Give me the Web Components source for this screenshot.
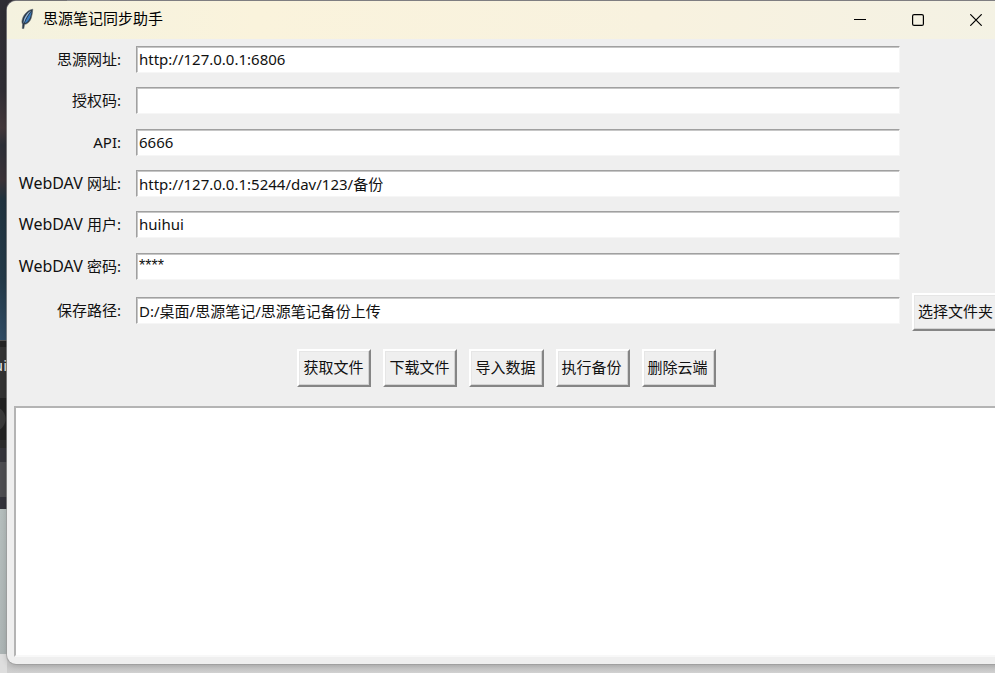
<!DOCTYPE html>
<html lang="zh-CN">
<head>
<meta charset="utf-8">
<title>思源笔记同步助手</title>
<style>
html,body{height:100%;margin:0;overflow:hidden}
body{font-family:"Noto Sans","Noto Sans CJK SC",sans-serif;font-size:15px;line-height:21px;color:#111}
</style>
</head>
<body>
<desk-top>
  <desk-strip slot="strip">ui</desk-strip>
  <app-window>
    <title-bar slot="bar">思源笔记同步助手</title-bar>
    <field-group>
      <field-row label="思源网址:" value="http://127.0.0.1:6806"></field-row>
      <field-row label="授权码:" value=""></field-row>
      <field-row label="API:" value="6666"></field-row>
      <field-row prefix="WebDAV" label="网址:" value="http://127.0.0.1:5244/dav/123/备份"></field-row>
      <field-row prefix="WebDAV" label="用户:" value="huihui"></field-row>
      <field-row class="secret" prefix="WebDAV" label="密码:" value="****"></field-row>
    </field-group>
    <field-row class="path" label="保存路径:" value="D:/桌面/思源笔记/思源笔记备份上传"><tk-button>选择文件夹</tk-button></field-row>
    <button-bar>
      <tk-button>获取文件</tk-button>
      <tk-button>下载文件</tk-button>
      <tk-button>导入数据</tk-button>
      <tk-button>执行备份</tk-button>
      <tk-button>删除云端</tk-button>
    </button-bar>
    <log-box></log-box>
  </app-window>
</desk-top>
<script>
const define = (name, html, setup) => {
  const t = document.createElement('template');
  t.innerHTML = html;
  customElements.define(name, class extends HTMLElement {
    constructor() {
      super();
      this.attachShadow({mode: 'open'}).append(t.content.cloneNode(true));
    }
    connectedCallback() { if (setup) setup(this, this.shadowRoot); }
  });
};

define('desk-top', `<style>
:host{display:grid;grid-template-columns:7px minmax(0,1fr);height:100vh;box-sizing:border-box;overflow:hidden;
  background:linear-gradient(90deg,#302e35 0 67px,#77757b 67px 110px,#514c55 110px) top/100% 12px no-repeat,
  linear-gradient(#d8d8d8,#c9c9c9 12px,#d0d0d0) bottom/100% 19px no-repeat,#302e35}
.main{display:flex;flex-direction:column;padding:1px 0 9px;margin-right:-11px;min-width:0}
::slotted(app-window){flex:1}
</style><slot name="strip"></slot><div class="main"><slot></slot></div>`);

define('desk-strip', `<style>
:host{display:flex;flex-direction:column;align-items:flex-end;box-sizing:border-box;padding-top:355px;overflow:hidden;color:#e6e6e6;
  background:radial-gradient(circle at -7px 419px,#393939 12px,transparent 13px),
  linear-gradient(#2e2d34 0,#302e35 90px,#43383b 128px,#2d3038 145px,#3b3338 180px,#20333f 200px,#243a49 280px,#304c64 340px,
  #555 340px 341px,#242424 341px 347px,#333 347px 398px,#222 398px 440px,#2d2d2d 440px 448px,#35353b 448px 462px,
  #4d4d51 462px 497px,#33333b 497px 509px,#b5bebd 509px,#adb5b5 654px,#dedede 654px)}
</style><slot></slot>`);

define('app-window', `<style>
:host{display:flex;flex-direction:column;background:#efefef;border-radius:9px;overflow:hidden;box-shadow:0 0 0 1px #999a,0 2px 6px #0003}
::slotted(.path){margin-top:6px}
</style><slot name="bar"></slot><slot></slot>`);

define('title-bar', `<style>
:host{display:flex;align-items:center;height:38px;padding-left:12px;padding-right:1px;color:#000;background:linear-gradient(90deg,#f4f2df,#faf3dc 25%,#f8f2df 65%,#f4f2e4)}
.name{flex:1;margin-left:7px;line-height:20px;padding-bottom:4px}
button{width:58px;height:38px;padding:0;border:0;background:none;display:grid;place-items:center;color:#000}
svg{display:block}
.quill{margin-bottom:2px}
</style>
<svg class="quill" width="17" height="22" viewBox="0 0 17 22" aria-hidden="true">
<path d="M13.400 1.300C9.400 1.900 5 6 3.600 10.400c-.9 2.400-.9 4.200 0 5.900L3.300 20.400l1.500.2.7-4.100c3-.5 5.800-3.200 6.700-6.400 1-3.200 1.300-5.600 1.600-8.800z" fill="#2b3948" stroke="#56606a" stroke-width=".6"/>
<path d="M12.300 2.500C9.300 4 6 8 4.900 12c-.4 1.500-.4 2.500-.2 3.500C6.300 11 8.900 6.200 12.300 2.500z" fill="#91b6dc"/>
<path d="M12.300 3.700C9 7.800 7 11.500 5.700 15.300c2.200-.7 4.500-3 5.300-5.500.7-2.300 1.200-4 1.600-6.100z" fill="#397bbd"/>
</svg>
<span class="name"><slot></slot></span>
<button aria-label="最小化"><svg width="12" height="12"><path d="M0 5.500h12" stroke="currentColor"/></svg></button>
<button aria-label="最大化"><svg width="12" height="12"><rect x=".6" y=".6" width="10.800" height="10.800" rx="1.500" fill="none" stroke="currentColor" stroke-width="1.200"/></svg></button>
<button aria-label="关闭"><svg width="12" height="12"><path d="M.3.300l11.400 11.400M11.700.300L.3 11.700" stroke="currentColor" stroke-width="1.200"/></svg></button>`);

define('field-group', `<style>
:host{display:grid;grid-auto-rows:1fr;min-height:248px;align-items:center}
</style><slot></slot>`);

define('field-row', `<style>
:host{display:grid;grid-template-columns:114px minmax(0,1fr) 89px;align-items:center;padding-right:5px}
label{text-align:right;white-space:nowrap}
.prefix{font-size:16px}
input{box-sizing:border-box;width:auto;min-width:0;height:27px;margin:0 12px 0 15px;padding:0 2px 1px;font:inherit;color:#111;background:#fff;
  border:1px solid;border-color:#a0a0a0 #f6f6f6 #f6f6f6 #a0a0a0;box-shadow:inset 1px 1px #c6c6c6;border-radius:0;outline:0}
:host(.secret) input{font-family:"Liberation Sans",sans-serif;font-size:16px}
:host(.path) label,:host(.path) input{margin-bottom:3px}
</style><label for="f"><span class="prefix"></span><span class="text"></span></label><input id="f" type="text" autocomplete="off"><slot></slot>`, (el, root) => {
  const prefix = el.getAttribute('prefix');
  root.querySelector('.prefix').textContent = prefix ? prefix + ' ' : '';
  root.querySelector('.text').textContent = el.getAttribute('label');
  root.querySelector('input').value = el.getAttribute('value');
});

define('tk-button', `<style>
:host{display:block}
button{display:block;box-sizing:border-box;width:100%;height:38px;padding:0 6px 2px 4px;font:inherit;line-height:21px;white-space:nowrap;color:#111;background:#efefef;
  border:2px solid;border-color:#fff #858585 #858585 #fff;border-radius:0;box-shadow:inset -1px -1px #d2d2d2,inset 1px 1px #e6e6e6}
</style><button type="button"><slot></slot></button>`);

define('button-bar', `<style>
:host{display:flex;justify-content:center;gap:12px;margin:18px 0 19px}
</style><slot></slot>`);

define('log-box', `<style>
:host{display:flex;flex:1;min-height:80px;padding:0 7px 7px}
textarea{box-sizing:border-box;flex:1;resize:none;margin:0;padding:2px;font:inherit;background:#fff;
  border:2px solid;border-color:#b4b4b4 #f8f8f8 #f8f8f8 #b4b4b4;border-radius:0;outline:0}
</style><textarea aria-label="日志"></textarea>`);
</script>
</body>
</html>
